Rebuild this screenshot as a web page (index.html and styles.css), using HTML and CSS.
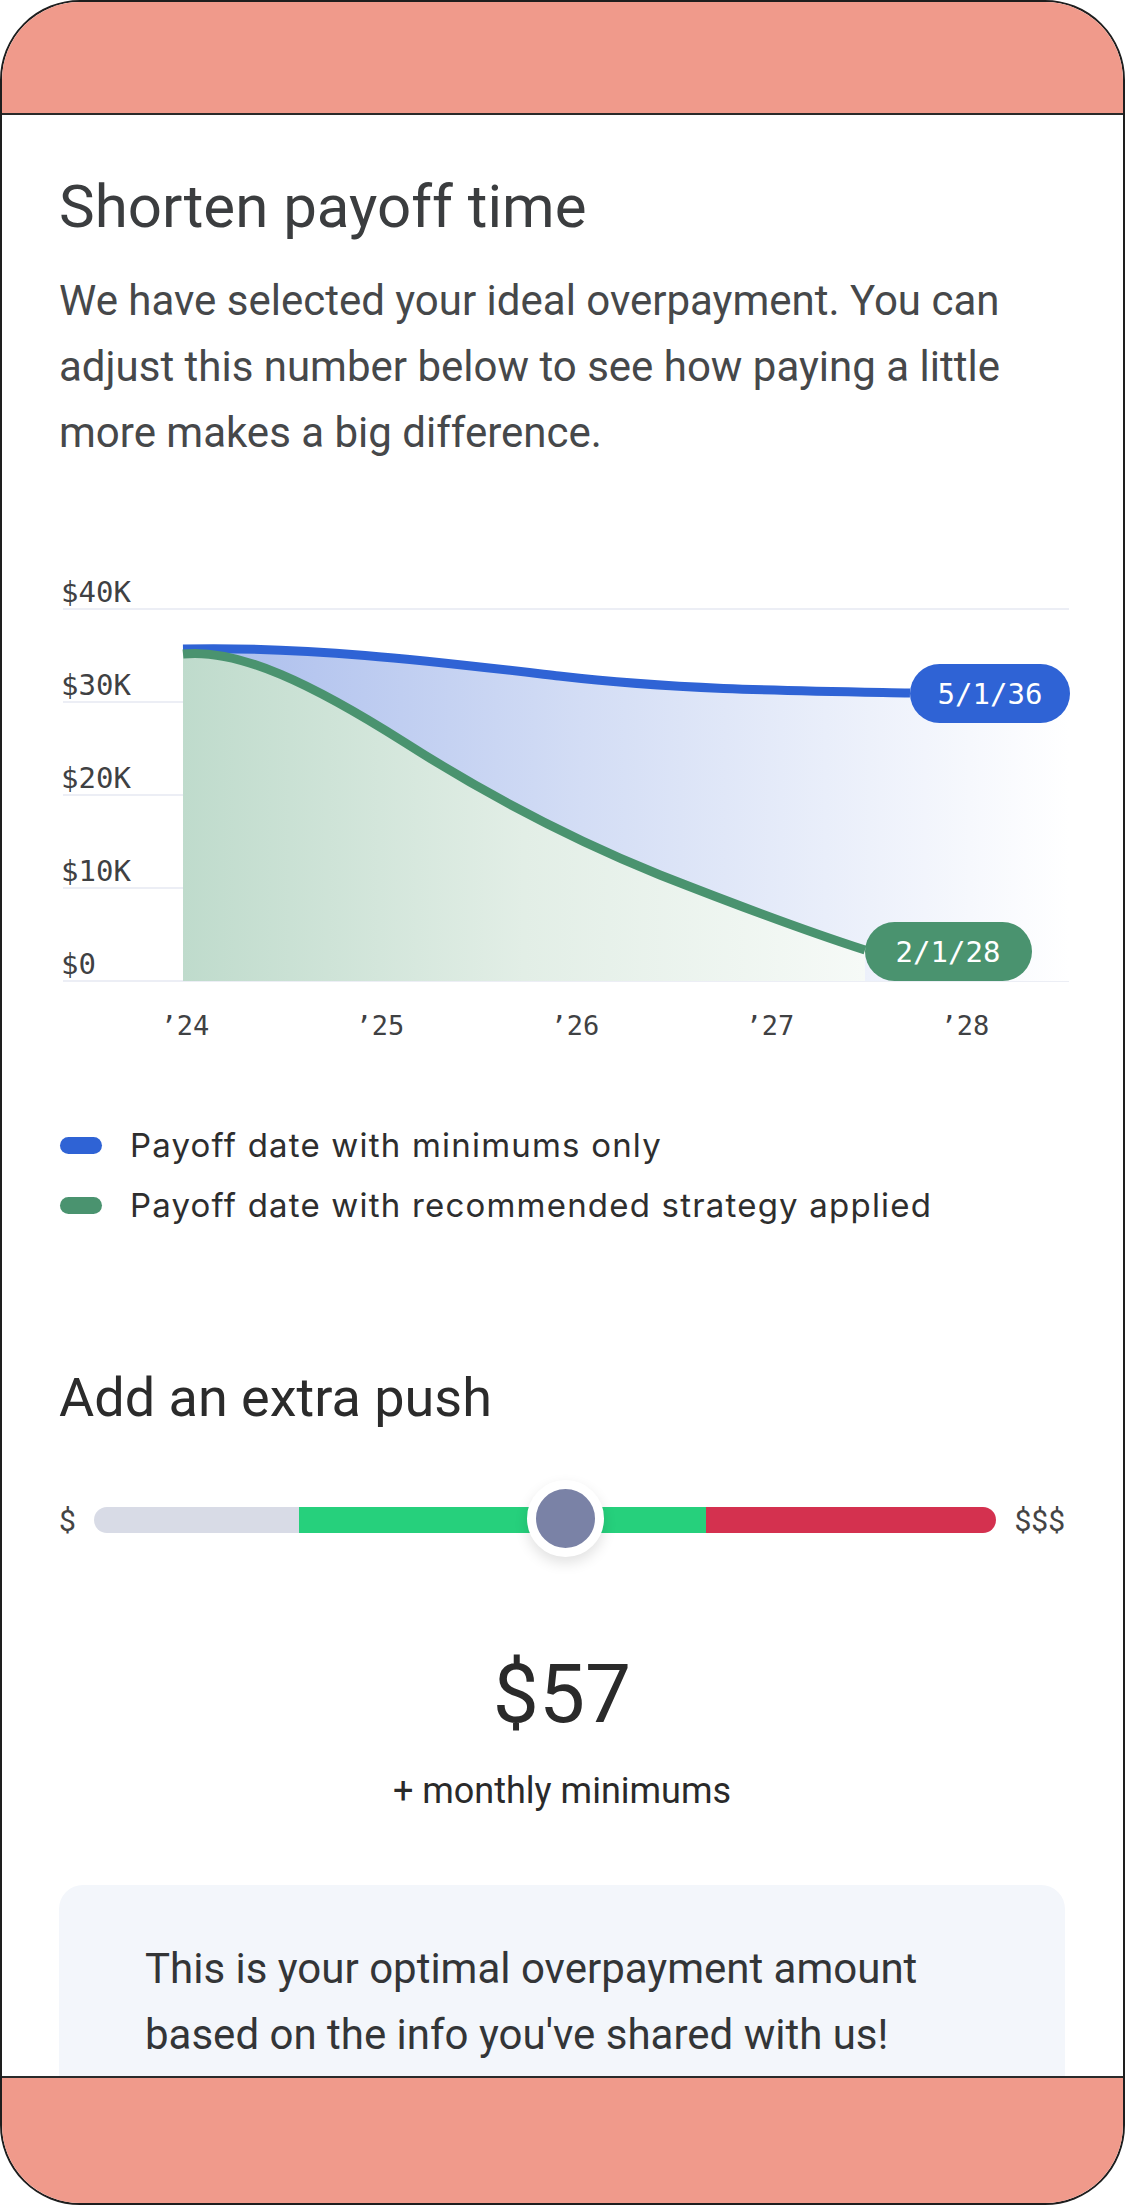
FILE: index.html
```html
<!DOCTYPE html>
<html lang="en">
<head>
  <meta charset="UTF-8">
  <title>Shorten payoff time</title>
  <meta name="viewport" content="width=device-width, initial-scale=1.0">
  <link rel="stylesheet" href="styles.css">
</head>
<body>
  <div class="phone">
    <div class="bar bar-top"></div>

    <main class="screen">
      <h1 class="title">Shorten payoff time</h1>
      <p class="lead">We have selected your ideal overpayment. You can adjust this number below to see how paying a little more makes a big difference.</p>

      <!-- Payoff chart -->
      <svg class="chart" width="1012" height="480" viewBox="0 0 1012 480">
        <defs>
          <linearGradient id="blueFill" x1="0" y1="0" x2="1" y2="0">
            <stop offset="0" stop-color="#a9bcec"/>
            <stop offset="0.45" stop-color="#d3ddf5"/>
            <stop offset="1" stop-color="#ffffff"/>
          </linearGradient>
          <linearGradient id="greenFill" x1="0" y1="0" x2="1" y2="0">
            <stop offset="0" stop-color="#bfdbcc"/>
            <stop offset="0.5" stop-color="#e2eee6"/>
            <stop offset="1" stop-color="#f6faf7"/>
          </linearGradient>
        </defs>

        <g class="grid">
          <line x1="4" y1="39" x2="1010" y2="39"/>
          <line x1="4" y1="132" x2="1010" y2="132"/>
          <line x1="4" y1="225" x2="1010" y2="225"/>
          <line x1="4" y1="318" x2="1010" y2="318"/>
          <line x1="4" y1="411" x2="1010" y2="411"/>
        </g>

        <g class="axis-y">
          <text x="2" y="32">$40K</text>
          <text x="2" y="125">$30K</text>
          <text x="2" y="218">$20K</text>
          <text x="2" y="311">$10K</text>
          <text x="2" y="404">$0</text>
        </g>

        <path d="M124,79 C250,76 380,92 500,106 C620,120 740,121 851,123 L1010,123 L1010,411 L124,411 Z" fill="url(#blueFill)"/>
        <path d="M124,84 C180,78 255,115 345,172 C420,220 500,264 601,305 C680,336 750,362 806,380 L806,411 L124,411 Z" fill="url(#greenFill)"/>

        <path class="line line-blue" d="M124,79 C250,76 380,92 500,106 C620,120 740,121 851,123"/>
        <path class="line line-green" d="M124,84 C180,78 255,115 345,172 C420,220 500,264 601,305 C680,336 750,362 806,380"/>

        <rect x="851" y="94" width="160" height="59" rx="29.5" fill="#2f63d5"/>
        <text class="pill-text" x="931" y="134">5/1/36</text>
        <rect x="806" y="352" width="167" height="59" rx="29.5" fill="#4a936f"/>
        <text class="pill-text" x="889" y="392">2/1/28</text>

        <g class="axis-x">
          <text x="126" y="465">’24</text>
          <text x="321" y="465">’25</text>
          <text x="516" y="465">’26</text>
          <text x="711" y="465">’27</text>
          <text x="906" y="465">’28</text>
        </g>
      </svg>

      <ul class="legend">
        <li><span class="swatch swatch-blue"></span>Payoff date with minimums only</li>
        <li><span class="swatch swatch-green"></span>Payoff date with recommended strategy applied</li>
      </ul>

      <h2 class="subtitle">Add an extra push</h2>

      <div class="slider">
        <span class="slider-end">$</span>
        <div class="track">
          <span class="seg seg-low"></span>
          <span class="seg seg-mid"></span>
          <span class="seg seg-high"></span>
          <span class="thumb"></span>
        </div>
        <span class="slider-end">$$$</span>
      </div>

      <div class="amount">$57</div>
      <div class="amount-note">+ monthly minimums</div>

      <div class="info">This is your optimal overpayment amount based on the info you've shared with us!</div>
    </main>

    <div class="bar bar-bottom"></div>
  </div>
</body>
</html>
```

FILE: styles.css
```css
* {
  box-sizing: border-box;
}

body {
  margin: 0;
  background: white;
  font-family: Roboto, "Noto Sans", sans-serif;
}

.phone {
  width: 1125px;
  height: 2205px;
  border: 2px solid #1e1e1e;
  border-radius: 80px;
  overflow: hidden;
  display: flex;
  flex-direction: column;
  background: white;
}

.bar {
  background: #f09a8b;
  flex-shrink: 0;
}

.bar-top {
  height: 113px;
  border-bottom: 2px solid #2a2a2a;
}

.bar-bottom {
  height: 127px;
  border-top: 2px solid #2a2a2a;
}

.screen {
  flex: 1;
  overflow: hidden;
  padding: 56px 58px 0 57px;
}

.title {
  margin: 0;
  font-size: 60px;
  line-height: 72px;
  font-weight: 400;
  color: #3b3d3f;
}

.lead {
  margin: 25px 0 0;
  font-size: 42px;
  line-height: 66px;
  color: #46484a;
}

/* chart */
.chart {
  display: block;
  margin-top: 104px;
  overflow: visible;
}

.grid line {
  stroke: #eceef5;
  stroke-width: 2;
}

.axis-y text,
.axis-x text,
.pill-text {
  font-family: "DejaVu Sans Mono", "Liberation Mono", monospace;
}

.axis-y text {
  font-size: 29px;
  fill: #3f4143;
}

.axis-x text {
  font-size: 27px;
  fill: #3f4143;
  text-anchor: middle;
}

.pill-text {
  font-size: 29px;
  fill: white;
  text-anchor: middle;
}

.line {
  fill: none;
  stroke-width: 9;
}

.line-blue {
  stroke: #2f63d5;
}

.line-green {
  stroke: #4a936f;
}

/* legend */
.legend {
  list-style: none;
  margin: 65px 0 0;
  padding: 0;
  font-family: Inter, "Open Sans", sans-serif;
  font-size: 33px;
  letter-spacing: 1.2px;
  color: #2e2e2e;
}

.legend li {
  display: flex;
  align-items: center;
  height: 60px;
}

.swatch {
  width: 42px;
  height: 17px;
  border-radius: 9px;
  margin: 0 28px 0 1px;
}

.swatch-blue {
  background: #2f63d5;
}

.swatch-green {
  background: #4a936f;
}

.subtitle {
  margin: 131px 0 0;
  font-size: 54px;
  line-height: 64px;
  font-weight: 400;
  color: #2b2b2b;
}

/* slider */
.slider {
  display: flex;
  align-items: center;
  gap: 18px;
  height: 80px;
  margin-top: 50px;
}

.slider-end {
  font-size: 30px;
  color: #444;
}

.track {
  position: relative;
  flex: 1;
  display: flex;
  height: 26px;
}

.seg-low {
  flex: 204;
  background: #d8dbe6;
  border-radius: 13px 0 0 13px;
}

.seg-mid {
  flex: 405;
  background: #26d07c;
}

.seg-high {
  flex: 289;
  background: #d4314f;
  border-radius: 0 13px 13px 0;
}

.thumb {
  position: absolute;
  left: 52.3%;
  top: 50%;
  width: 77px;
  height: 77px;
  margin: -40px 0 0 -38.5px;
  border-radius: 50%;
  background: #7a82a6;
  border: 9px solid white;
  box-shadow: 0 6px 14px rgba(0,0,0,0.12);
}

.amount {
  margin-top: 86px;
  text-align: center;
  font-size: 82px;
  line-height: 96px;
  color: #2a2a2a;
}

.amount-note {
  margin-top: 27px;
  text-align: center;
  font-size: 36px;
  line-height: 44px;
  color: #2a2a2a;
}

.info {
  margin-top: 72px;
  padding: 51px 88px 60px 86px;
  background: #f3f6fb;
  border-radius: 24px;
  font-size: 42px;
  line-height: 66px;
  color: #333537;
}
```
